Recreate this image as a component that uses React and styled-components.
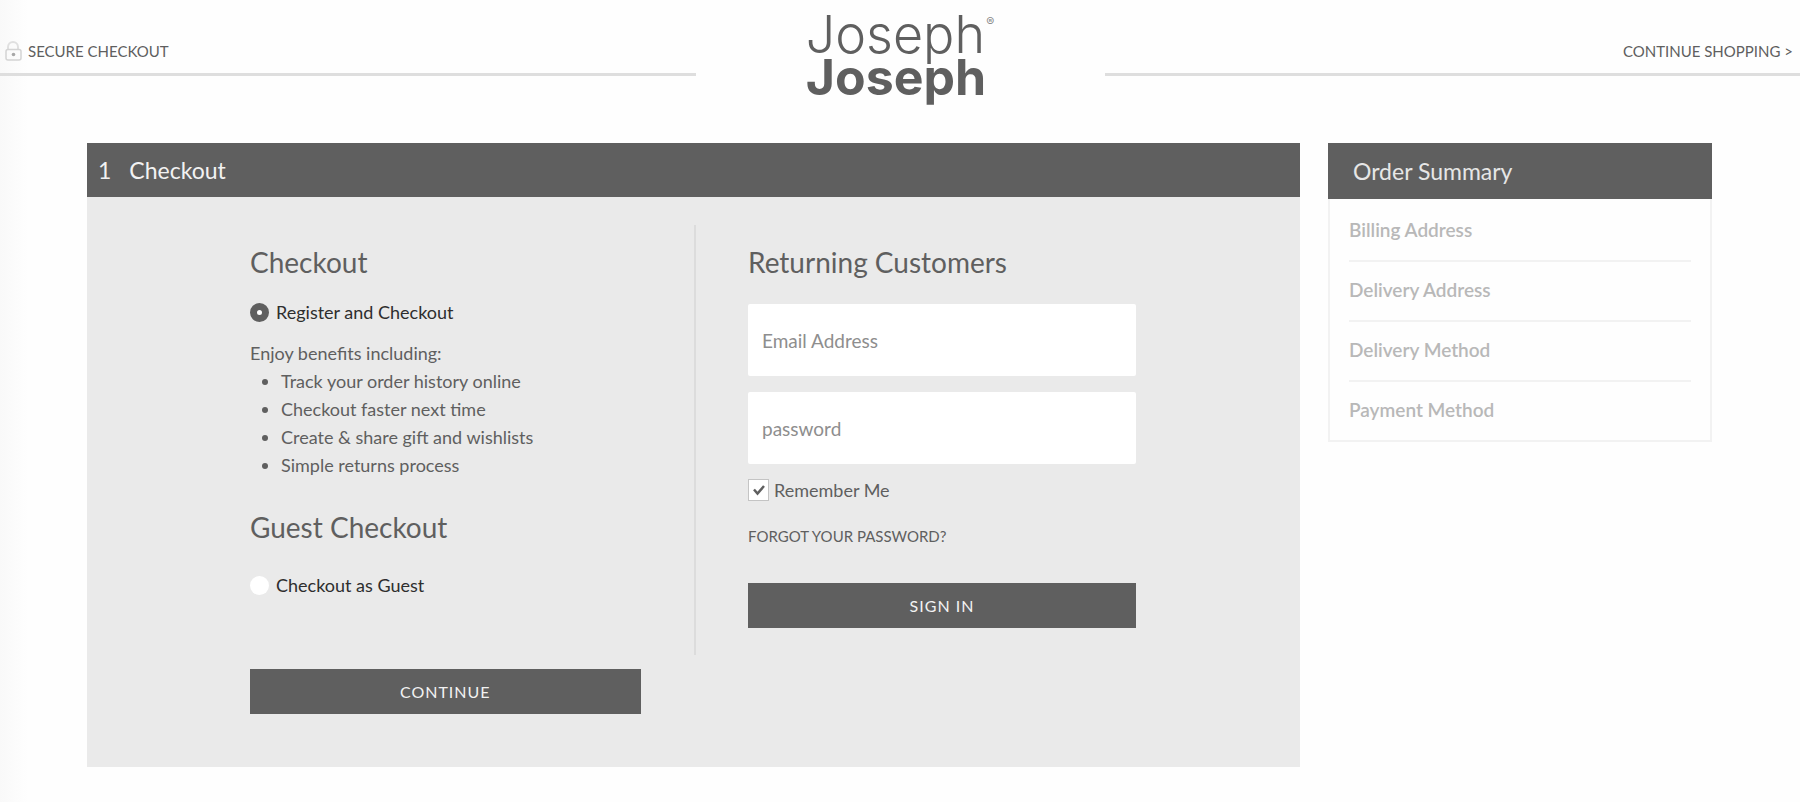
import React, { useState } from 'react';
import styled, { createGlobalStyle } from 'styled-components';

const benefits = [
  'Track your order history online',
  'Checkout faster next time',
  'Create & share gift and wishlists',
  'Simple returns process',
];

const steps = [
  'Billing Address',
  'Delivery Address',
  'Delivery Method',
  'Payment Method',
];

//

const LockIcon = () => (
  <svg width="18" height="22" viewBox="0 0 18 22" fill="none" aria-hidden="true">
    <path d="M4 9.5V7a5 5 0 0 1 10 0v2.500" stroke="#e0e0e0" strokeWidth="2" />
    <rect x="2" y="9.5" width="15" height="10.500" rx="2" stroke="#d4d4d4" strokeWidth="1.500" />
    <circle cx="9.5" cy="14.5" r="1.800" fill="#a8a8a8" />
  </svg>
);

const SiteHeader = () => (
  <Header>
    <HeaderBar>
      <LockIcon />
      <span>SECURE CHECKOUT</span>
    </HeaderBar>
    <Logo href="#home" aria-label="Joseph Joseph">
      <span>
        <LogoWord>Joseph</LogoWord>
        <LogoWord $bold>Joseph</LogoWord>
      </span>
      <LogoMark>®</LogoMark>
    </Logo>
    <HeaderBar $end>
      <a href="#shop">CONTINUE SHOPPING &gt;</a>
    </HeaderBar>
  </Header>
);

const OrderSummary = () => (
  <Summary>
    <SummaryTitle>Order Summary</SummaryTitle>
    <SummaryList>
      {steps.map(step => (
        <li key={step}>{step}</li>
      ))}
    </SummaryList>
  </Summary>
);

const App = () => {
  const [mode, setMode] = useState('register');

  return (
    <>
      <GlobalStyle />
      <SiteHeader />
      <Page>
        <Panel>
          <PanelTitle>
            <span>1</span>
            <span>Checkout</span>
          </PanelTitle>

          <Columns>
            <NewCustomer id="new-customer">
              <Heading>Checkout</Heading>
              <Option>
                <Radio
                  name="mode"
                  checked={mode === 'register'}
                  onChange={() => setMode('register')}
                />
                Register and Checkout
              </Option>
              <Benefits>
                <p>Enjoy benefits including:</p>
                <ul>
                  {benefits.map(benefit => (
                    <li key={benefit}>{benefit}</li>
                  ))}
                </ul>
              </Benefits>
              <Heading>Guest Checkout</Heading>
              <Option $spaced>
                <Radio
                  name="mode"
                  checked={mode === 'guest'}
                  onChange={() => setMode('guest')}
                />
                Checkout as Guest
              </Option>
            </NewCustomer>

            <Returning onSubmit={e => e.preventDefault()}>
              <Heading>Returning Customers</Heading>
              <Fields>
                <Field type="email" placeholder="Email Address" aria-label="Email Address" />
                <Field type="password" placeholder="password" aria-label="password" />
              </Fields>
              <Remember>
                <Tick>
                  <input type="checkbox" defaultChecked />
                  <svg viewBox="0 0 21 22" fill="none" aria-hidden="true">
                    <path d="M6 10.500l3.500 4L16 7" stroke="#5f5f5f" strokeWidth="2.500" />
                  </svg>
                </Tick>
                Remember Me
              </Remember>
              <Forgot href="#forgot">FORGOT YOUR PASSWORD?</Forgot>
              <Button type="submit">SIGN IN</Button>
            </Returning>
          </Columns>

          <Actions>
            <Button type="submit" form="new-customer">
              CONTINUE
            </Button>
          </Actions>
        </Panel>

        <OrderSummary />
      </Page>
    </>
  );
};

export default App;

const GlobalStyle = createGlobalStyle`
  :root {
    --dark: #5f5f5f;
    --panel: #eaeaea;
    --rule: #dedede;
    --hairline: #f2f2f2;
  }

  * {
    box-sizing: border-box;
  }

  body {
    min-height: 100vh;
    margin: 0;
    background: linear-gradient(to right, #f9f9f9, #fefefe 28px);
    color: var(--dark);
    font: 18px/28px Lato, 'Open Sans', sans-serif;
  }

  h1, h2, p, ul {
    margin: 0;
    padding: 0;
    font-weight: 400;
  }

  a {
    color: inherit;
    text-decoration: none;
  }
`;

const Header = styled.header`
  display: grid;
  grid-template-columns: 1fr 409px 1fr;
  align-items: start;
`;

const HeaderBar = styled.div`
  display: flex;
  align-items: center;
  justify-content: ${({ $end }) => ($end ? 'flex-end' : 'flex-start')};
  gap: 6px;
  height: 76px;
  padding: 28px 7px 0 4px;
  border-bottom: 3px solid var(--rule);
  font-size: 15px;
  line-height: 20px;
`;

const Logo = styled.a`
  display: flex;
  justify-content: center;
  padding-top: 14px;
  font-family: Inter, sans-serif;
`;

const LogoWord = styled.span`
  display: block;
  font-size: ${({ $bold }) => ($bold ? 50 : 52)}px;
  font-weight: ${({ $bold }) => ($bold ? 700 : 300)};
  line-height: 42px;
`;

const LogoMark = styled.span`
  color: #8a8a8a;
  font-size: 12px;
  line-height: 16px;
`;

const Page = styled.main`
  display: grid;
  grid-template-columns: 1fr 384px;
  align-items: start;
  gap: 28px;
  padding: 45px 88px 36px 87px;
`;

const Panel = styled.section`
  padding-bottom: 53px;
  background: var(--panel);
`;

const PanelTitle = styled.h1`
  display: flex;
  align-items: center;
  gap: 18px;
  height: 54px;
  padding: 0 11px;
  background: var(--dark);
  color: #f2f2f2;
  font-size: 23px;
`;

const Columns = styled.div`
  display: grid;
  grid-template-columns: 609fr 604fr;
  padding: 28px 0 14px;
`;

const NewCustomer = styled.form`
  padding: 19px 53px 56px 163px;
  border-right: 2px solid #dcdcdc;
`;

const Returning = styled.form`
  display: flex;
  flex-direction: column;
  align-items: flex-start;
  padding: 19px 164px 0 52px;
`;

const Heading = styled.h2`
  font-size: 28px;
  line-height: 36px;
`;

const Option = styled.label`
  display: flex;
  align-items: center;
  gap: 7px;
  margin-top: ${({ $spaced }) => ($spaced ? 26 : 18)}px;
  color: #2e2e2e;
`;

const Radio = styled.input.attrs({ type: 'radio' })`
  appearance: none;
  width: 19px;
  height: 19px;
  margin: 0;
  border-radius: 50%;
  background: #fff;

  &:checked {
    border: 7px solid var(--dark);
  }
`;

const Benefits = styled.div`
  margin: 13px 0 30px;

  ul {
    padding-left: 31px;
  }
`;

const Fields = styled.div`
  display: grid;
  gap: 16px;
  width: 100%;
  margin: 24px 0 12px;
`;

const Field = styled.input`
  width: 100%;
  height: 72px;
  padding: 0 14px;
  border: 0;
  border-radius: 2px;
  background: #fff;
  color: var(--dark);
  font: inherit;
  font-size: 19px;

  &::placeholder {
    color: #8e8e8e;
    opacity: 1;
  }
`;

const Remember = styled.label`
  display: flex;
  align-items: center;
  gap: 5px;
`;

const Tick = styled.span`
  display: grid;
  width: 21px;
  height: 22px;

  input,
  svg {
    grid-area: 1 / 1;
    width: 100%;
    height: 100%;
    margin: 0;
  }

  input {
    appearance: none;
    border: 1px solid #c4c4c4;
    background: #fff;
  }

  svg {
    pointer-events: none;
  }

  input:not(:checked) + svg {
    display: none;
  }
`;

const Forgot = styled.a`
  margin: 22px 0 37px;
  font-size: 15px;
  line-height: 20px;
`;

const Button = styled.button`
  width: 100%;
  height: 45px;
  padding: 0;
  border: 0;
  background: var(--dark);
  color: #f2f2f2;
  font: inherit;
  font-size: 16px;
  letter-spacing: 1px;
  cursor: pointer;
`;

const Actions = styled.div`
  width: 50%;
  padding: 0 53px 0 163px;
`;

const Summary = styled.aside`
  border: 2px solid var(--hairline);
  border-top: 0;
`;

const SummaryTitle = styled.h2`
  margin: 0 -2px;
  padding: 0 25px;
  background: var(--dark);
  color: #e6e6e6;
  font-size: 23px;
  line-height: 56px;
`;

const SummaryList = styled.ul`
  padding: 3px 19px 0;
  color: #b8b8b8;
  font-size: 19px;
  font-weight: 600;
  line-height: 55px;
  list-style: none;

  li {
    padding-bottom: 3px;
  }

  li:not(:last-child) {
    border-bottom: 2px solid var(--hairline);
  }
`;
